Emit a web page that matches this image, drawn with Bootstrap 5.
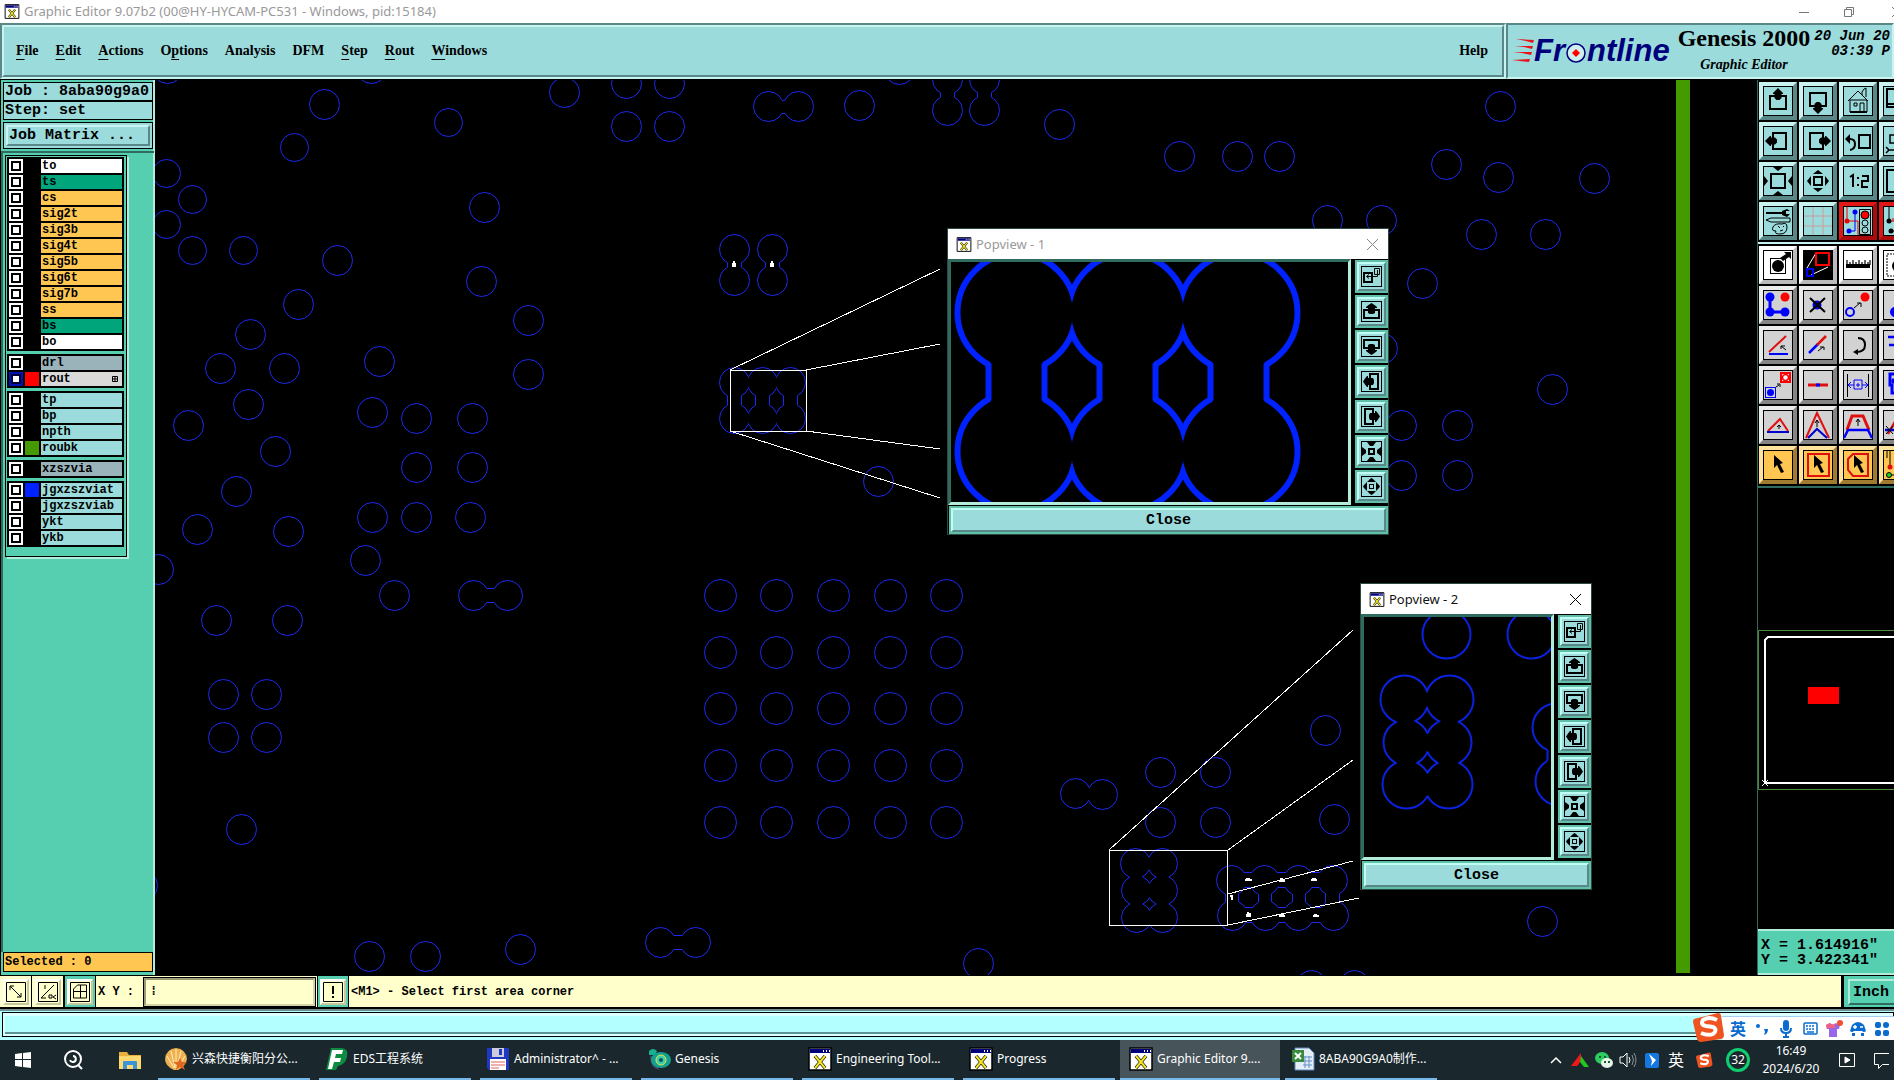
<!DOCTYPE html>
<html lang="en">
<head>
<meta charset="utf-8">
<meta name="viewport" content="width=device-width, initial-scale=1">
<title>Graphic Editor 9.07b2</title>
<link rel="stylesheet" href="https://cdn.jsdelivr.net/npm/bootstrap@5.3.0/dist/css/bootstrap.min.css">
<style>
:root{--face:#9bdbdb;--lite:#c9f3f1;--dark:#5a8888;--teal:#55cfb0;--teal-l:#b4ecdc;--teal-d:#2f6b5e;--cream:#ffffcc}
body{background:#000;color:#000;font-family:"Liberation Sans",sans-serif;font-size:12px;line-height:1}
button,input,a{font:inherit;color:inherit;text-decoration:none;border-radius:0}
button{padding:0;border:0;background:none}
svg{display:block}
.ui-sans{font-family:"Noto Sans","Noto Sans CJK SC",sans-serif}
.ui-mono{font-family:"Liberation Mono",monospace;font-weight:700}
.ui-serif{font-family:"Liberation Serif",serif;font-weight:700}
.mono-lg{font-size:15px;line-height:15px}
.titlebar{height:23px;background:#fff;color:#999;font-size:13px}
.wrapx{overflow:hidden;min-width:0}
.band{height:56px}
.sunk{border:2px solid;border-color:var(--dark) var(--lite) var(--lite) var(--dark);background:var(--face)}
.raised{border:2px solid;border-color:var(--lite) var(--dark) var(--dark) var(--lite);background:var(--face)}
.menu-row{gap:17px;padding:0 14px 0 12px;font-size:14px}
.menu-row u{text-underline-offset:4px}
.brand{flex:0 0 388px}
.logo-word{font-size:31px;line-height:30px;font-weight:700;font-style:italic;color:#00007c}
.gen-title{font-size:24px;line-height:26px}
.gen-sub{font-size:14px;line-height:18px;font-style:italic;padding-top:5px}
.stamp{font-style:italic;font-size:14px;line-height:15px;white-space:nowrap}
.work{margin-top:1px}
/* left panel */
.left{flex:0 0 155px;background:var(--teal);border-left:1px solid #000;border-right:2px solid var(--teal-l);padding:2px 0 3px 2px}
.boxed{border:1px solid #000;background:var(--face);height:19px;line-height:17px;padding-left:1px;white-space:nowrap}
.matrix-wrap{border:1px solid #000;margin-top:2px;padding:2px;height:27px;background:var(--face)}
.matrix-btn{border:2px solid;border-color:var(--lite) var(--dark) var(--dark) var(--lite);padding-left:1px;background:var(--face)}
.list-well{border-top:2px solid var(--teal-d);border-left:2px solid var(--teal-d);margin:2px -1px 0 -2px;padding:2px 0 0 2px}
.list-box{width:122px;border:1px solid #000;box-shadow:2px 2px 0 var(--teal-l);padding:1px 2px 9px 1px;gap:3px}
.lgroup{background:#000;padding:2px;gap:2px}
.lrow{gap:2px;height:14px}
.lrow input{appearance:none;width:14px;height:14px;margin:0;border:2px solid #fff;background:#fff;outline:0;box-shadow:inset 0 0 0 2px #000}
.lrow input:checked{border-color:#0010b4;box-shadow:inset 0 0 0 2px #00003c}
.chip{width:14px;height:14px}
.lname{flex:1;padding-left:1px;font-size:12px;line-height:14px;overflow:hidden}
.c-white{background:#fff}.c-green{background:#00a57c}.c-orange{background:#ffc752}.c-slate{background:#9ab3bb}.c-grey{background:#d9d9d9}.c-cyan{background:#9bdbdb}
.ink-red{background:#f00}.ink-green{background:#459a00}.ink-blue{background:#0022ff}
.sel-box{border:1px solid #000;background:#ffc752;height:20px;line-height:18px;padding-left:1px;font-size:12px}
/* canvas */
.board{background:#000}
.board>svg{position:absolute;inset:0;width:100%;height:100%}
.pop{position:absolute;background:#000;border:1px solid #2a4740}
.pop-1{left:792px;top:148px;width:442px}
.pop-2{left:1205px;top:503px;width:232px}
.pop-title{height:30px;background:#fff;color:#999;padding:0 10px 0 8px;font-size:13px}
.pop-2 .pop-title{color:#111}
.pop-view{border:3px solid;border-color:var(--teal-d) var(--teal-l) var(--teal-l) var(--teal-d);height:246px}
.pop-side{gap:2px;width:33px;padding-top:1px}
.pbtn{width:33px;height:33px;border:2px solid #5fbfa8;background:var(--face)}
.pbtn>span{display:grid;place-items:center;border:2px solid;border-color:#c0fff4 var(--dark) var(--dark) #c0fff4;height:100%}
.pbtn svg{width:21px;height:21px}
.pop-close{height:28px;border:2px solid #5fbfa8;margin:1px 0 0 1px}
.pop-close>span{display:block;height:100%;border:2px solid;border-color:#c0fff4 var(--dark) var(--dark) #c0fff4;background:var(--face);line-height:21px}
/* right column */
.right{flex:0 0 137px;border-left:1px solid var(--teal-d)}
.tools{display:grid;grid-template-columns:repeat(4,38px);gap:2px;padding:2px 0 2px 1px;width:160px}
.tools+.tools{border-top:2px solid var(--lite);border-bottom:2px solid var(--teal-d)}
.tool{width:38px;height:38px;border:4px solid;border-color:var(--lite) var(--dark) var(--dark) var(--lite);background:var(--face)}
.tool svg{width:30px;height:30px}
.t-red{border-color:#e01818 #a80c0c #a80c0c #e01818}
.t-white{background:#fff;border-color:#fff #bbb #bbb #fff}
.t-grey{background:#d2d2d2;border-color:#ececec #858585 #858585 #ececec}
.t-gold{background:#ffc752;border-color:#ffe29c #a07c30 #a07c30 #ffe29c}
.overview{height:162px;margin-bottom:138px}
.coords{height:46px;background:var(--teal);border-top:2px solid var(--teal-l);border-bottom:2px solid var(--teal-l);padding:7px 0 0 3px;white-space:nowrap}
/* message row */
.msg{height:34px;border-bottom:2px solid #000;border-top:1px solid #000;background:var(--cream)}
.mbtn{width:32px;border-right:1px solid #000;display:grid;place-items:center;flex:none}
.mbtn>span{border:2px solid;border-color:#fff #c8c8a0 #c8c8a0 #fff;padding:1px;background:var(--cream)}
.mbtn-teal{background:var(--teal);border-left:1px solid #000}
.mbtn svg{width:20px;height:20px}
.xy-label{padding:0 9px 0 2px}
.xy-in{width:171px;border:2px solid;border-color:#9a9a78 #d4d4a8 #d4d4a8 #9a9a78;outline:1px solid #000;background:var(--cream);margin:2px 2px 1px 1px;padding:0 4px}
.msg-text{padding-left:2px}
.unit-box{width:53px;background:var(--teal);border-left:3px solid #000;padding:3px 0 2px 4px}
.unit-btn{width:60px;border:2px solid;border-color:var(--teal-l) var(--teal-d) var(--teal-d) var(--teal-l);text-align:left;padding-left:3px}
.bluebar{height:31px;background:#b3ffff;border-top:2px solid #6f8f8f;padding:1px 0 0 2px}
.bluebar>div{height:25px;border:1px solid #000;box-shadow:inset 2px 3px 0 #dcffff,inset 0 -2px 0 #dcffff,inset 0 -4px 0 #5a9494}
/* taskbar */
.taskbar{height:40px;background:#1a282e;color:#fff}
.tb-ico{flex:0 0 56px;display:grid;place-items:center}
.tb-start{flex-basis:46px}
.task-list{gap:9px}
.task{width:152px;height:40px;border-bottom:2px solid #76b9ed;gap:4px;padding-left:6px;white-space:nowrap;flex:none}
.task svg{width:24px;height:24px;flex:none}
.task-on{background:#47545a;width:160px;margin:0 -4px;padding-left:9px}
.tray>*{display:grid;place-items:center;height:40px;flex:none}
.w24{width:24px}.w32{width:32px}.w36{width:36px}.w42{width:42px}.w70{width:70px}.w26{width:26px}
.clock{line-height:18px}
.ring32{width:24px;height:24px;border:3px solid #0fce6f;border-radius:50%;display:grid;place-items:center}
.ime{position:absolute;right:0;bottom:40px;height:24px;width:172px;background:#fff;color:#0a6cce;border-top:1px solid #a8ccf0}
.ime>*{width:24px;flex:none;display:grid;place-items:center}
.ime-logo{position:absolute;left:-29px;top:-5px;width:32px;height:30px}
</style>
</head>
<body class="vh-100 overflow-hidden d-flex flex-column">

<!-- shared icon symbols -->
<svg width="0" height="0" class="position-absolute">
<defs>
<symbol id="frm" viewBox="0 0 30 30"><rect x=".5" y=".5" width="29" height="29" fill="none" stroke="#000"/></symbol>
<symbol id="i-up" viewBox="0 0 30 30"><use href="#frm"/><path d="M12 10H7v13h16V10h-5" fill="none" stroke="#000" stroke-width="2"/><path d="M15 2l3 3 2 2v1h-1.500v4l-2 2h-3l-2-2V8H10V7l2-2z"/></symbol>
<symbol id="i-down" viewBox="0 0 30 30"><use href="#i-up" transform="rotate(180 15 15)"/></symbol>
<symbol id="i-left" viewBox="0 0 30 30"><use href="#i-up" transform="rotate(270 15 15)"/></symbol>
<symbol id="i-right" viewBox="0 0 30 30"><use href="#i-up" transform="rotate(90 15 15)"/></symbol>
<symbol id="i-home" viewBox="0 0 30 30"><use href="#frm"/><path d="M5 15L15 5l10 10M7 14v12h17V14zM19 9V6l2-3 2-1v9M11 17h3v3h-3zM17 17h4v9h-4z" fill="none" stroke="#000"/><path d="M7 26h17" stroke="#000" stroke-width="2"/></symbol>
<symbol id="i-undo" viewBox="0 0 30 30"><use href="#frm"/><rect x="16" y="9" width="11" height="13" fill="none" stroke="#000" stroke-width="2"/><path d="M4 13h3q5 0 5 5t-5 6" fill="none" stroke="#000" stroke-width="2"/><path d="M2 13l5-5v10z"/></symbol>
<symbol id="i-out" viewBox="0 0 30 30"><use href="#frm"/><rect x="8" y="8" width="14" height="14" fill="none" stroke="#000" stroke-width="2"/><path d="M10 1h10l-5 4zM10 29h10l-5-4zM1 10v10l4-5zM29 10v10l-4-5z"/></symbol>
<symbol id="i-in" viewBox="0 0 30 30"><use href="#frm"/><rect x="11" y="11" width="8" height="8" fill="none" stroke="#000" stroke-width="2"/><path d="M10 8h10l-5-4zM10 22h10l-5 4zM8 10v10l-4-5zM22 10v10l4-5z"/></symbol>
<symbol id="i-12" viewBox="0 0 30 30"><use href="#frm"/><path d="M7 11l3-2v12M14 12h2M14 19h2M19 10h6v5h-6v6h6" fill="none" stroke="#000" stroke-width="2"/></symbol>
<symbol id="p-frm" viewBox="0 0 21 21"><rect x=".5" y=".5" width="20" height="20" fill="none" stroke="#000"/></symbol>
<symbol id="p-dup" viewBox="0 0 21 21"><use href="#p-frm"/><path d="M3 7h8v9H3z" fill="none" stroke="#000" stroke-width="2"/><path d="M13.500 2.500h5v6h-5zM16.500 4v6.500H6M8 8.500l-2.500 2L8 12.500" fill="none" stroke="#000"/></symbol>
<symbol id="p-up" viewBox="0 0 21 21"><use href="#p-frm"/><path d="M8 9H3v8h15V9h-5" fill="none" stroke="#000" stroke-width="2"/><path d="M10.500 2l3 2 2.500 2v1h-2v5l-2 1H9l-2-1V7H5V6l2.500-2z"/></symbol>
<symbol id="p-down" viewBox="0 0 21 21"><use href="#p-up" transform="rotate(180 10.500 10.500)"/></symbol>
<symbol id="p-left" viewBox="0 0 21 21"><use href="#p-up" transform="rotate(270 10.500 10.500)"/></symbol>
<symbol id="p-right" viewBox="0 0 21 21"><use href="#p-up" transform="rotate(90 10.500 10.500)"/></symbol>
<symbol id="p-star" viewBox="0 0 21 21"><use href="#p-frm"/><rect x="8" y="8" width="5" height="5" fill="none" stroke="#000" stroke-width="2"/><path d="M6 1h9l-3 4H9zM6 20h9l-3-4H9zM1 6v9l4-3V9zM20 6v9l-4-3V9z"/></symbol>
<symbol id="p-in" viewBox="0 0 21 21"><use href="#p-frm"/><rect x="8.500" y="8.500" width="4" height="4" fill="none" stroke="#000"/><path d="M6 6h9l-3-3-1.500-1L9 3zM6 15h9l-3 3-1.500 1L9 18zM6 6v9l-3-3-1-1.500L3 9zM15 6v9l3-3 1-1.500L18 9z"/><path d="M7 7h7v7H7z" fill="none" stroke="#9bdbdb"/></symbol>
<symbol id="i-brush" viewBox="0 0 30 30"><use href="#frm"/><path d="M3 6h16v2H3zM19 5l5-2 3 2-4 0v3l4 0-3 3-5-2z"/><path d="M3 14l5-2h19v4H8zM10 21q2-4 9-3 5-2 5 3 0 7-7 7-6 0-4-3-5 0-3-4zm5-1l2 2m3-2l1 1m-4 4l3-1" fill="none" stroke="#000"/></symbol>
<symbol id="i-grid" viewBox="0 0 30 30"><path d="M10 1v28M20 1v28M1 10h28M1 20h28" stroke="#c79c9c"/><use href="#frm"/></symbol>
<symbol id="i-net" viewBox="0 0 30 30"><path d="M4 1v14h11v14" fill="none" stroke="#e00"/><path d="M12 5v20H6" fill="none" stroke="#00f"/><circle cx="4" cy="15" r="2.500" fill="#e00"/><circle cx="12" cy="6" r="2.500" fill="#00f"/><circle cx="6" cy="25" r="2.500" fill="#00f"/><path d="M16.500 3.500h11v25h-11z" fill="#9bdbdb" stroke="#000"/><circle cx="22" cy="9" r="4" fill="#f00" stroke="#000"/><circle cx="22" cy="17" r="3" fill="none" stroke="#000"/><circle cx="22" cy="24" r="3" fill="none" stroke="#000"/><use href="#frm"/></symbol>
<symbol id="i-net2" viewBox="0 0 30 30"><path d="M6 1v14M6 25h8" stroke="#000"/><path d="M6 15h8v-4m-4 4v-3" stroke="#e00" fill="none"/><circle cx="6" cy="15" r="2.500"/><circle cx="8" cy="25" r="2.500"/><use href="#frm"/></symbol>
<symbol id="i-page" viewBox="0 0 30 30"><use href="#frm"/><path d="M15 3H4v18h11M4 18h11" fill="none" stroke="#000" stroke-width="2"/></symbol>
<symbol id="i-scr" viewBox="0 0 30 30"><use href="#frm"/><path d="M15 9H7v8h8M3 21l3 3-3 3M5 24h8" fill="none" stroke="#000" stroke-width="1.500"/></symbol>
<symbol id="i-box" viewBox="0 0 30 30"><use href="#frm"/><path d="M15 4H4v22h11" fill="none" stroke="#000" stroke-width="2"/></symbol>
<symbol id="i-pad" viewBox="0 0 30 30"><use href="#frm"/><rect x="7.500" y="8.500" width="15" height="15" fill="none" stroke="#000"/><circle cx="15" cy="16" r="6"/><path d="M17 8l6-4-2-2h7v7l-2-2-6 4z"/></symbol>
<symbol id="i-pop" viewBox="0 0 30 30"><rect width="30" height="30"/><path d="M4 18L13 3M8 25l17-8" stroke="#fff"/><rect x="13" y="3" width="13" height="12" fill="none" stroke="#f00" stroke-width="2"/><rect x="4" y="19" width="6" height="7" fill="none" stroke="#00f" stroke-width="2"/></symbol>
<symbol id="i-rule" viewBox="0 0 30 30"><use href="#frm"/><path d="M3 14h24v4H3z"/><path d="M4 15v-5m3 5v-3m3 3v-5m3 5v-3m3 3v-5m3 5v-3m3 3v-5m3 5v-3m2 3v-5" stroke="#000" stroke-width="1.200"/></symbol>
<symbol id="i-dash" viewBox="0 0 30 30"><use href="#frm"/><path d="M15 4H4v22h11" fill="none" stroke="#000" stroke-dasharray="2 1"/><circle cx="15" cy="16" r="6"/></symbol>
<symbol id="i-pads" viewBox="0 0 30 30"><use href="#frm"/><path d="M7 7v15h15" fill="none" stroke="#00f" stroke-width="3"/><g fill="#00f"><circle cx="7" cy="7" r="4.500"/><circle cx="7" cy="22" r="4.500"/><circle cx="22" cy="22" r="4.500"/></g><circle cx="22" cy="7" r="4.500" fill="#f00"/></symbol>
<symbol id="i-del" viewBox="0 0 30 30"><use href="#frm"/><circle cx="14" cy="15" r="4.500" fill="#00c"/><path d="M7 8l15 14M22 8L7 22" stroke="#000" stroke-width="2"/></symbol>
<symbol id="i-move" viewBox="0 0 30 30"><use href="#frm"/><circle cx="7" cy="22" r="4" fill="none" stroke="#00f" stroke-width="2"/><circle cx="22" cy="7" r="4.500" fill="#f00"/><path d="M11 18l6-5m-3 0h4v4" fill="none" stroke="#000"/></symbol>
<symbol id="i-half" viewBox="0 0 30 30"><use href="#frm"/><circle cx="12" cy="22" r="5" fill="#00f"/></symbol>
<symbol id="i-ang" viewBox="0 0 30 30"><use href="#frm"/><path d="M6 22L23 6" stroke="#e01010" stroke-width="2"/><path d="M6 24h19" stroke="#00f" stroke-width="2"/><path d="M23 20l-5-4m0 3v-3h4" fill="none" stroke="#000"/></symbol>
<symbol id="i-line" viewBox="0 0 30 30"><use href="#frm"/><path d="M6 23l9-9" stroke="#00f" stroke-width="2.500"/><path d="M14 15l9-9" stroke="#e01010" stroke-width="2.500"/><path d="M15 21l5-4m-3 0h4v3" fill="none" stroke="#000"/></symbol>
<symbol id="i-rot" viewBox="0 0 30 30"><use href="#frm"/><path d="M15 8q7 0 7 7t-9 7" fill="none" stroke="#000" stroke-width="2"/><path d="M10 22l5-3v6z"/></symbol>
<symbol id="i-par" viewBox="0 0 30 30"><use href="#frm"/><path d="M5 7h12M6 15h12" stroke="#00f" stroke-width="2.500"/></symbol>
<symbol id="i-copy" viewBox="0 0 30 30"><use href="#frm"/><rect x="2.500" y="17.500" width="10" height="10" fill="none" stroke="#00f"/><circle cx="7.500" cy="22.500" r="3.500" fill="#00f"/><rect x="18" y="3" width="9" height="9" fill="#fff" stroke="#f00" stroke-width="2"/><circle cx="22.500" cy="7.500" r="3" fill="#fff" stroke="#f00" stroke-width="1.500"/><path d="M13 17l3-2m-2-1h3v3" fill="none" stroke="#000"/></symbol>
<symbol id="i-seg" viewBox="0 0 30 30"><use href="#frm"/><path d="M5 15h20" stroke="#e01010" stroke-width="3"/><path d="M13 15h4" stroke="#00f" stroke-width="3"/></symbol>
<symbol id="i-str" viewBox="0 0 30 30"><use href="#frm"/><path d="M4.500 4v23M25.500 4v23" stroke="#000"/><path d="M11 10h8v9h-8zM5 15h6m8 0h6M8 12l-3 3 3 3m14-6l3 3-3 3m-7-5v4m-2-2h4" fill="none" stroke="#00f"/></symbol>
<symbol id="i-key" viewBox="0 0 30 30"><use href="#frm"/><path d="M14 4H7v11h2v8h6M11 9a3 3 0 000 4" fill="none" stroke="#00f" stroke-width="3"/></symbol>
<symbol id="i-tri" viewBox="0 0 30 30"><use href="#frm"/><path d="M5 21l12-12 8 12" fill="none" stroke="#e01010" stroke-width="2"/><path d="M4 22h22" stroke="#00c" stroke-width="2"/><path d="M16 19v-4m-2 2l2-2 2 2" fill="none" stroke="#000"/></symbol>
<symbol id="i-tri2" viewBox="0 0 30 30"><use href="#frm"/><path d="M3 28L14 3l12 25" fill="none" stroke="#e01010" stroke-width="2"/><path d="M5 28l9-9 10 9" fill="none" stroke="#00c" stroke-width="2"/><path d="M14 17v-7m-2 3l2-3 2 3" fill="none" stroke="#000"/></symbol>
<symbol id="i-trap" viewBox="0 0 30 30"><use href="#frm"/><path d="M4 20L9 6h11l6 14" fill="none" stroke="#e01010" stroke-width="3"/><path d="M1 28l4-8h20l4 8" fill="none" stroke="#00f" stroke-width="2.500"/><path d="M15 16v-7m-2 3l2-3 2 3" fill="none" stroke="#000"/></symbol>
<symbol id="i-trix" viewBox="0 0 30 30"><use href="#frm"/><path d="M5 24L17 3" stroke="#e01010" stroke-width="2.500"/><path d="M2 20h14" stroke="#00c" stroke-width="2.500"/><path d="M3 16l7 8m0-8l-7 8" stroke="#000"/></symbol>
<symbol id="i-arr" viewBox="0 0 30 30"><use href="#frm"/><path d="M11 5l9 8-3 1 4 8-3 1-4-8-3 3z"/></symbol>
<symbol id="i-arr2" viewBox="0 0 30 30"><rect x="5" y="4" width="21" height="22" fill="none" stroke="#e01010" stroke-width="2"/><use href="#i-arr"/></symbol>
<symbol id="i-arr3" viewBox="0 0 30 30"><path d="M10 4h15v22H10l-5-6V9z" fill="none" stroke="#e01010" stroke-width="2"/><use href="#i-arr"/></symbol>
<symbol id="i-arr4" viewBox="0 0 30 30"><use href="#frm"/><path d="M7 1v15M7 25h9M4 1v7" stroke="#000"/><circle cx="7" cy="17" r="2.500" fill="#e01010"/><circle cx="6" cy="25" r="2.500" fill="#1ed01e" stroke="#000"/></symbol>
<symbol id="xw" viewBox="0 0 24 24"><path d="M1 1h22v22H1z" fill="#fff" stroke="#000" stroke-width="1.500"/><path d="M2 2h20v4H2z" fill="#00007c"/><path d="M15 3h1v2h-1zM18 3h1v2h-1zM21 3h1v2h-1z" fill="#fff"/><path d="M7 9l10 12M17 9L7 21" stroke="#000" stroke-width="3.500"/><path d="M7 9l10 12M17 9L7 21" stroke="#f4e820" stroke-width="2"/></symbol>
<symbol id="sg" viewBox="0 0 32 30"><path d="M1 7L25 1q3 0 3 3l3 19q0 3-3 4L8 30q-3 0-4-3L0 10q0-2 1-3z" fill="#ee5320"/><path d="M24 8q-8-4-14 0-3 5 3 6l7 1q5 3 0 7-5 2-12-1" fill="none" stroke="#fff" stroke-width="4"/></symbol>
</defs>
</svg>

<div class="titlebar ui-sans d-flex align-items-center ps-1 flex-shrink-0 wrapx">
  <svg width="16" height="15" class="me-1"><use href="#xw" width="16" height="15"/></svg>
  <span>Graphic Editor 9.07b2 (00@HY-HYCAM-PC531 - Windows, pid:15184)</span>
  <svg width="104" height="20" viewBox="0 0 104 20" class="ms-auto" fill="none" stroke="#777"><path d="M9 10.500h10M54.500 7.500h7v7h-7zM56.500 7.500v-2h7v7h-2M102 5l10 10m-10 0L112 5"/></svg>
</div>

<header class="band d-flex flex-shrink-0">
  <div class="sunk flex-fill d-flex">
    <nav class="raised flex-fill d-flex align-items-center menu-row ui-serif">
      <a href="#"><u>F</u>ile</a><a href="#"><u>E</u>dit</a><a href="#"><u>A</u>ctions</a><a href="#">O<u>p</u>tions</a><a href="#">Analysis</a><a href="#">DFM</a><a href="#"><u>S</u>tep</a><a href="#"><u>R</u>out</a><a href="#"><u>W</u>indows</a><a href="#" class="ms-auto">Help</a>
    </nav>
  </div>
  <div class="brand sunk wrapx d-flex">
    <div class="d-flex align-items-center ps-1">
      <svg width="22" height="26" viewBox="0 0 22 26"><path d="M4 1l18 1-1 3-7-2zM3 8l18 0-1 3-8-2zM1 14l19 0-1 3-9-2zM0 22l18-1-1 3-9-1z" fill="#e8141c"/></svg>
      <span class="logo-word">Fr</span>
      <svg width="22" height="30" viewBox="0 0 22 30"><circle cx="11" cy="17" r="9" fill="#cfeeee" stroke="#00007c" stroke-width="1.500"/><path d="M11 13l4 4-4 4-4-4z" fill="#f00"/></svg>
      <span class="logo-word">ntline</span>
    </div>
    <div class="text-center ps-1 ms-1 ui-serif">
      <div class="gen-title">Genesis 2000</div>
      <div class="gen-sub">Graphic Editor</div>
    </div>
    <div class="stamp ui-mono ps-1 pt-1 text-end">20 Jun 20<br>03:39 P</div>
  </div>
</header>

<main class="work flex-fill d-flex wrapx" style="min-height:0">
  <aside class="left d-flex flex-column ui-mono">
    <div class="boxed mono-lg">Job : 8aba90g9a0</div>
    <div class="boxed mono-lg">Step: set</div>
    <div class="matrix-wrap d-flex"><button class="matrix-btn mono-lg flex-fill text-start">Job Matrix ...</button></div>
    <div class="list-well flex-fill"><div class="list-box d-flex flex-column" id="layers"></div></div>
    <div class="sel-box">Selected : 0</div>
  </aside>

  <section class="board flex-fill position-relative wrapx">
    <svg>
      <g transform="translate(-155 -80)">
        <rect x="1676" y="79" width="14" height="894" fill="#459a00"/>
        <g id="holes" fill="none" stroke="#1c2af0"></g>
        <g id="unions"></g>
        <g fill="#fff">
          <path d="M733 261h2v2h1v4h-4v-4h1zM771 261h2v2h1v4h-4v-4h1zM1246 878h4v1h2v2h-7v-2h1zM1280 878h3v1h2v3h-6v-2h1zM1312 878h4v1h1v2h-6v-2h1zM1247 912h2v1h2v4h-5v-3h1zM1280 914h4v1h1v2h-6v-2h1zM1314 914h3v1h2v2h-6v-2h1zM1230 895h3v5h-2v-3h-1z"/>
        </g>
        <g fill="none" stroke="#fff" shape-rendering="crispEdges">
          <path d="M730.500 370.500h76v61h-76zM1109.500 850.500h118v75h-118z"/>
          <path d="M730 370L940 269M806 370L940 344M806 431L940 449M730 431L940 498M1109 850L1353 630M1228 850L1353 760M1228 894L1353 861M1228 925L1359 898"/>
        </g>
      </g>
    </svg>

    <div class="pop pop-1">
      <div class="pop-title d-flex align-items-center ui-sans">
        <svg width="16" height="15" class="me-1"><use href="#xw" width="16" height="15"/></svg><span>Popview - 1</span>
        <button class="ms-auto" aria-label="Close window"><svg width="11" height="11" stroke="#888"><path d="M0 0l11 11M11 0L0 11"/></svg></button>
      </div>
      <div class="d-flex gap-1">
        <div class="pop-view flex-fill">
          <svg width="100%" height="240"><g id="pv1" transform="translate(-951 -262)"></g></svg>
        </div>
        <div class="pop-side d-flex flex-column"></div>
      </div>
      <div class="d-flex"><button class="pop-close flex-fill ui-mono mono-lg"><span>Close</span></button></div>
    </div>

    <div class="pop pop-2">
      <div class="pop-title d-flex align-items-center ui-sans">
        <svg width="16" height="15" class="me-1"><use href="#xw" width="16" height="15"/></svg><span>Popview - 2</span>
        <button class="ms-auto" aria-label="Close window"><svg width="11" height="11" stroke="#000"><path d="M0 0l11 11M11 0L0 11"/></svg></button>
      </div>
      <div class="d-flex gap-1">
        <div class="pop-view flex-fill">
          <svg width="100%" height="240"><g id="pv2" transform="translate(-1364 -617)"></g></svg>
        </div>
        <div class="pop-side d-flex flex-column"></div>
      </div>
      <div class="d-flex"><button class="pop-close flex-fill ui-mono mono-lg"><span>Close</span></button></div>
    </div>
  </section>

  <aside class="right wrapx d-flex flex-column">
    <div class="tools" data-icons="up down home page left right undo scr out in 12 box brush grid net net2"></div>
    <div class="tools" data-icons="pad pop rule dash pads del move half ang line rot par copy seg str key tri tri2 trap trix arr arr2 arr3 arr4"></div>
    <svg class="overview mt-auto flex-shrink-0" width="137" height="162"><path d="M137 1.500H.5v159H137" fill="none" stroke="#4c8c3c"/><path d="M137 8H10L7 11v143h130" fill="none" stroke="#fff" stroke-width="2"/><path d="M50 58h31v17H50z" fill="#f00"/><path d="M4 151l6 6m0-6l-6 6" stroke="#fff"/></svg>
    <div class="coords ui-mono mono-lg flex-shrink-0">X = 1.614916"<br>Y = 3.422341"</div>
  </aside>
</main>

<div class="msg d-flex flex-shrink-0 ui-mono">
  <button class="mbtn" aria-label="Snap mode"><span><svg viewBox="0 0 20 20" fill="none" stroke="#000"><path d="M.5.500h19v19H.5zM4 4l11 11M4 8V4h4m7 7v4h-4"/></svg></span></button>
  <button class="mbtn" aria-label="Angle mode"><span><svg viewBox="0 0 20 20" fill="none" stroke="#000"><path d="M.5.500h19v19H.5zM16 3L3 16h5M7 3v4m4 6h3v3h-3zm7 0l-3 2 3 2"/></svg></span></button>
  <button class="mbtn mbtn-teal" aria-label="Grid mode"><span><svg viewBox="0 0 20 20" fill="none" stroke="#000"><path d="M.5.500h19v19H.5zM3.500 7l4-4h9v13h-13zM10.500 3v13M3.500 9.500h13"/></svg></span></button>
  <label for="xy" class="align-self-center xy-label flex-shrink-0">X Y :</label>
  <input id="xy" class="xy-in" type="text" value="⁞">
  <button class="mbtn mbtn-teal" aria-label="Alert"><span><svg viewBox="0 0 20 20" fill="none" stroke="#000"><path d="M.5.500h19v19H.5z"/><path d="M10 4v8m0 2v2" stroke-width="2"/></svg></span></button>
  <span class="align-self-center msg-text flex-fill">&lt;M1&gt; - Select first area corner</span>
  <div class="unit-box wrapx d-flex"><button class="unit-btn mono-lg flex-shrink-0">Inch</button></div>
</div>
<div class="bluebar flex-shrink-0"><div></div></div>

<footer class="taskbar d-flex flex-shrink-0 ui-sans">
  <button class="tb-ico tb-start" aria-label="Start"><svg width="16" height="16" fill="#fff"><path d="M0 2l7-1v6H0zM8 1l8-1v7H8zM0 8h7v7l-7-1zM8 8h8v8l-8-1z"/></svg></button>
  <button class="tb-ico" aria-label="Search"><svg width="20" height="20" fill="none" stroke="#fff" stroke-width="2"><circle cx="9" cy="9" r="8"/><path d="M9 6a3 3 0 11-3 4M14 15l4 4"/></svg></button>
  <button class="tb-ico" aria-label="Files"><svg width="22" height="20"><path d="M0 2h8l2 3h12v14H0z" fill="#e9b03c"/><path d="M0 6h22v13H0z" fill="#ffd970"/><path d="M4 19v-7q0-1 1-1h12q1 0 1 1v7h-4v-4H8v4z" fill="#3c94d8"/></svg></button>
  <div class="d-flex wrapx task-list">
    <button class="task d-flex align-items-center"><svg viewBox="0 0 24 24"><path d="M12 1q10 1 11 11-1 7-9 11h-4Q1 19 1 12 2 2 12 1z" fill="#f0b050"/><path d="M12 2v19M7 4l4 17M17 4l-4 17M3 9l7 12M21 9l-7 12" stroke="#fff0c0" fill="none"/><path d="M16 11l2 4 5 0-4 3 2 5-5-3-4 3 1-5-4-3 5 0z" fill="#e0681c"/></svg>兴森快捷衡阳分公...</button>
    <button class="task d-flex align-items-center"><svg viewBox="0 0 24 24"><path d="M6 1h11q7 1 5 9-2 8-9 9l-2 4H1z" fill="#0c8c40"/><path d="M7 3h11l-1 4h-6l-1 4h6l-1 4H9l-2 7H3z" fill="#fff"/></svg>EDS工程系统</button>
    <button class="task d-flex align-items-center"><svg viewBox="0 0 24 24"><path d="M1 1h22v22H3l-2-2z" fill="#2038c0"/><path d="M6 1h12v9H6z" fill="#ccd"/><path d="M13 2h3v6h-3z" fill="#2038c0"/><path d="M4 12h16v11H4z" fill="#fff"/><path d="M5 15h14M5 18h14M5 21h8" stroke="#e06060"/></svg>Administrator^ - ...</button>
    <button class="task d-flex align-items-center"><svg viewBox="0 0 24 24"><path d="M2 4q4-4 8 0l-2 4H2z" fill="#18b090"/><path d="M3 9q0 12 9 14l-4-13z" fill="#446"/><ellipse cx="14" cy="13" rx="10" ry="8" fill="#14a090"/><circle cx="14" cy="13" r="5" fill="#3cd0a8" stroke="#e8e040"/><circle cx="14" cy="13" r="2" fill="#105060"/></svg>Genesis</button>
    <button class="task d-flex align-items-center"><svg><use href="#xw"/></svg>Engineering Tool...</button>
    <button class="task d-flex align-items-center"><svg><use href="#xw"/></svg>Progress</button>
    <button class="task task-on d-flex align-items-center"><svg><use href="#xw"/></svg>Graphic Editor 9....</button>
    <button class="task d-flex align-items-center"><svg viewBox="0 0 24 24"><path d="M4 1h14l5 5v17H4z" fill="#e4eef8" stroke="#6088b8"/><path d="M12 10h9m-9 4h9m-9 4h9M14 9v12m4-12v12" stroke="#6090c8"/><path d="M1 3h12v12H1z" fill="#388a3c"/><path d="M4 6l6 6m0-6l-6 6" stroke="#fff" stroke-width="2"/></svg>8ABA90G9A0制作...</button>
  </div>
  <div class="tray d-flex ms-auto">
    <span class="w24"><svg width="12" height="8" fill="none" stroke="#fff" stroke-width="1.500"><path d="M1 7l5-5 5 5"/></svg></span>
    <span class="w24"><svg width="18" height="16"><path d="M0 14L10 1v8l-4 5z" fill="#f01818"/><path d="M10 4l8 11h-5l-4-5z" fill="#20c820"/></svg></span>
    <span class="w24"><svg width="18" height="16"><ellipse cx="7" cy="6" rx="7" ry="6" fill="#2ecc60"/><ellipse cx="12" cy="11" rx="6" ry="5" fill="#e8f4e8"/><path d="M4 4h2v2H4zM9 4h2v2H9zM9 9h2v2H9zM13 9h2v2h-2z" fill="#1a5a30"/></svg></span>
    <span class="w24"><svg width="18" height="16" fill="none" stroke="#fff"><path d="M1 5h3l4-4v14l-4-4H1zM10 5q2 3 0 6"/><path d="M13 3q3 5 0 10M15 1q4 7 0 14" stroke="#8a9498"/></svg></span>
    <span class="w24"><svg width="14" height="15"><rect width="14" height="15" rx="2" fill="#1478e0"/><path d="M4 1l7 6-5 6 1-5z" fill="#fff"/></svg></span>
    <span class="w24 fs-6">英</span>
    <span class="w32"><svg width="17" height="16" viewBox="0 0 32 30"><use href="#sg"/></svg></span>
    <span class="w36"><span class="ring32">32</span></span>
    <span class="w70 text-center"><span class="clock">16:49<br>2024/6/20</span></span>
    <span class="w42"><svg width="16" height="14" fill="none" stroke="#fff"><path d="M.5.500h15v13H.5z"/><path d="M6 4l5 3-5 3z" fill="#fff"/></svg></span>
    <span class="w26 wrapx"><svg width="16" height="18" fill="none" stroke="#fff"><path d="M16 2.500H1.500v11h4v4l4-4H16"/></svg></span>
  </div>
</footer>

<div class="ime d-flex ui-sans fs-6 fw-bold">
  <svg class="ime-logo"><use href="#sg"/></svg>
  <span class="ms-1">英</span>
  <span><svg width="12" height="12" fill="#0a6cce"><circle cx="2" cy="3" r="2"/><path d="M8 6h4q0 5-4 6l1-3z"/></svg></span>
  <span><svg width="12" height="18"><rect x="3" width="6" height="11" rx="3" fill="#0a6cce"/><path d="M1 8q0 5 5 5t5-5M6 13v4M3 17h6" fill="none" stroke="#0a6cce" stroke-width="2"/></svg></span>
  <span><svg width="15" height="13" fill="none" stroke="#0a6cce" stroke-width="1.500"><rect x="1" y="1" width="13" height="11" rx="1"/><path d="M3 4h9M3 7h9" stroke-dasharray="2 1"/><path d="M4 10h7"/></svg></span>
  <span><svg width="18" height="18"><path d="M1 5l4-2q3 3 6 0l4 2-1 4h-2v8H4V9H2z" fill="#9868e8"/><path d="M1 5l4-2q3 3 5 0v5H4l-2 1z" fill="#f06080"/><circle cx="15" cy="3" r="3" fill="#f05030"/></svg></span>
  <span><svg width="16" height="15"><path d="M2 4q6-6 12 0l2 6q-2 2-4 0H4Q2 12 0 10zM2 12h3v3H2zM11 12h3v3h-3z" fill="#0a6cce"/><path d="M3 6h4M5 4v4M10 6h3" stroke="#fff" stroke-width="1.500"/></svg></span>
  <span><svg width="14" height="14" fill="#0a6cce"><rect width="6" height="6" rx="2"/><circle cx="11" cy="3" r="3"/><rect y="8" width="6" height="6" rx="2"/><rect x="8" y="8" width="6" height="6" rx="2"/></svg></span>
</div>

<script src="https://cdn.jsdelivr.net/npm/bootstrap@5.3.0/dist/js/bootstrap.bundle.min.js"></script>
<script>
const groups = [
  [['to','white'],['ts','green'],['cs','orange'],['sig2t','orange'],['sig3b','orange'],['sig4t','orange'],['sig5b','orange'],['sig6t','orange'],['sig7b','orange'],['ss','orange'],['bs','green'],['bo','white']],
  [['drl','slate'],['rout','grey','red']],
  [['tp','cyan'],['bp','cyan'],['npth','cyan'],['roubk','cyan','green']],
  [['xzszvia','slate']],
  [['jgxzszviat','cyan','blue'],['jgxzszviab','cyan'],['ykt','cyan'],['ykb','cyan']]
];
document.getElementById('layers').innerHTML = groups.map(g => '<div class="lgroup d-flex flex-column">' + g.map(([n, c, ink]) =>
  `<div class="lrow d-flex"><input type="checkbox" id="ly-${n}"${n === 'rout' ? ' checked' : ''}><span class="chip ${ink ? 'ink-' + ink : ''}"></span><label for="ly-${n}" class="lname c-${c} d-flex align-items-center justify-content-between">${n}${n === 'rout' ? '<svg width="6" height="6" class="me-1" fill="none" stroke="#000"><path d="M.5.500h5v5h-5zM3 0v6M0 3h6"/></svg>' : ''}</label></div>`).join('') + '</div>').join('');

// drilled holes: x, y pairs
const small = [[294,147],[448,122],[166,173],[192,199],[166,224],[192,250],[243,250]];
const holes = [[324,104],[167,68],[371,68],[337,260],[484,207],[481,281],[298,304],[250,334],[220,368],[284,368],[248,404],[188,425],[275,451],[236,491],[197,529],[288,531],[158,569],
[528,320],[528,374],[379,361],[372,412],[416,418],[472,418],[416,467],[472,467],[372,517],[416,517],[470,517],[365,560],[394,595],[216,620],[287,620],[223,694],[266,694],[223,737],[266,737],[241,829],[369,956],[425,956],[520,949],[142,885],
[564,92],[626,83],[669,83],[626,126],[669,126],[859,105],[899,69],[1059,124],[1179,156],[1237,156],[1279,156],[1446,164],[1498,177],[1500,106],[1594,178],[1327,220],[1381,220],[1481,234],[1545,234],[1422,283],[1552,389],[1382,348],[1401,425],[1457,425],[1401,475],[1457,475],[878,481],
[1325,730],[1160,772],[1215,772],[1160,822],[1215,822],[1334,819],[1542,921],[978,963],[1311,985],[1354,985]];
for (const x of [720,776,833,890,946]) for (const y of [595,652,708,765,822]) holes.push([x, y, 16]);
const ring = (x, y, r) => `<circle cx="${x + .5}" cy="${y + .5}" r="${r}"/>`;
document.getElementById('holes').innerHTML = small.map(p => ring(p[0], p[1], 14)).join('') + holes.map(p => ring(p[0], p[1], p[2] || 15)).join('');

// merged outline: each shape is stroked only where no other shape covers it
let maskId = 0;
function merge(circles, rects, pen, color) {
  const cut = pen > 3 ? 2 : 0;
  const draw = (s, d) => s.length === 3 ? ring(s[0], s[1], s[2] - d) :
    `<rect x="${s[0] + .5 + d}" y="${s[1] + .5 + d}" width="${s[2] - s[0] - 2 * d}" height="${s[3] - s[1] - 2 * d}"/>`;
  const all = circles.concat(rects);
  return all.map(s => {
    const id = 'mk' + (maskId++);
    return `<mask id="${id}" maskUnits="userSpaceOnUse" x="0" y="0" width="1900" height="1080"><rect width="1900" height="1080" fill="#fff"/><g fill="#000">${all.filter(o => o !== s).map(o => draw(o, cut)).join('')}</g></mask>` +
      `<g mask="url(#${id})" fill="none" stroke="${color}" stroke-width="${pen}">${draw(s, 0)}</g>`;
  }).join('');
}
const c = '#1c2af0';
const pair = (x1, y1, x2, y2, box) => merge([[x1, y1, 15], [x2, y2, 15]], box ? [box] : [], 1, c);
document.getElementById('unions').innerHTML =
  pair(734,249,734,280,[727,258,741,270]) +
  pair(772,249,772,280,[765,258,779,270]) +
  merge([734,762,790].flatMap(x => [[x,382,15],[x,418,15]]), [[727,385,741,415],[755,385,769,415],[783,385,797,415]], 1, c) +
  merge([[1135,863,15],[1162,863,15],[1136,890,15],[1162,890,15],[1136,917,15],[1162,917,15]], [], 1, c) +
  merge([[1231,880,15],[1264,880,15],[1298,880,15],[1332,880,15],[1232,915,15],[1265,915,15],[1298,915,15],[1333,915,15]],
        [[1231,872,1332,887],[1231,907,1332,922],[1225,880,1238,915],[1258,880,1271,915],[1292,880,1305,915],[1325,880,1339,915]], 1, c) +
  pair(1075,793,1102,794) +
  pair(473,595,507,595,[480,588,500,602]) +
  pair(660,942,695,942,[667,935,688,949]) +
  pair(768,106,798,106,[775,100,792,113]) +
  pair(947,79,947,110,[940,88,954,102]) +
  pair(984,79,984,110,[977,88,991,102]);
document.getElementById('pv1').innerHTML =
  merge([1016,1127,1238].flatMap(x => [[x,312,59],[x,451,59]]), [[988,335,1044,428],[1099,335,1155,428],[1210,335,1266,428]], 6, '#0022ff');
document.getElementById('pv2').innerHTML =
  merge([[1446,634,24]], [], 2, '#0a22e0') + merge([[1531,634,24]], [], 2, '#0a22e0') +
  merge([[1404,699,24],[1449,699,24],[1406,742,23],[1448,742,23],[1406,784,24],[1448,784,24]], [], 2, '#0a22e0') +
  merge([[1556,727,24],[1559,781,24]], [[1547,740,1575,770]], 2, '#0a22e0');

document.querySelectorAll('.pop-side').forEach(s => s.innerHTML = ['dup','up','down','left','right','star','in'].map(n =>
  `<button class="pbtn" aria-label="${n}"><span><svg><use href="#p-${n}"/></svg></span></button>`).join(''));
document.querySelectorAll('.tools').forEach((t, k) => t.innerHTML = t.dataset.icons.split(' ').map((n, i) => {
  const skin = k === 0 ? (n.startsWith('net') ? 't-red' : '') : i < 4 ? 't-white' : i < 20 ? 't-grey' : 't-gold';
  return `<button class="tool ${skin}" aria-label="${n}"><svg><use href="#i-${n}"/></svg></button>`;
}).join(''));
</script>
</body>
</html>
